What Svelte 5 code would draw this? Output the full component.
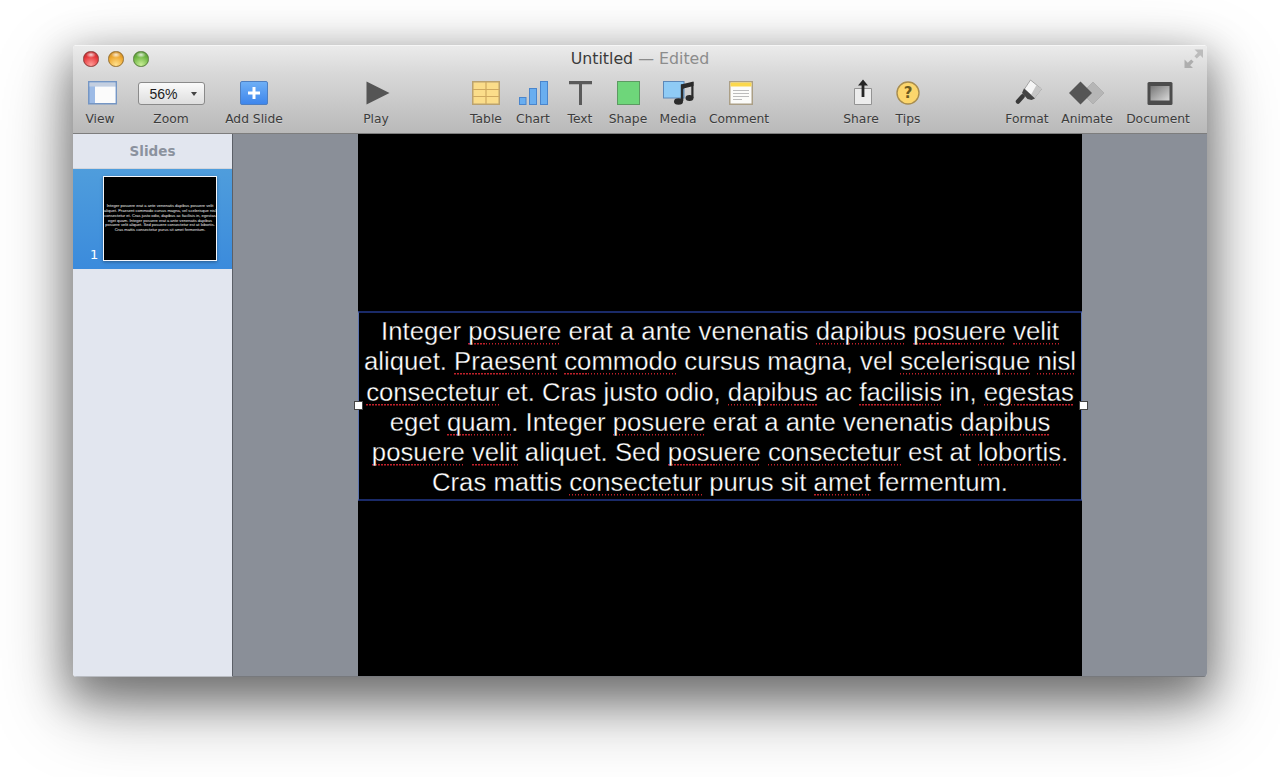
<script>
	const lines = [
		[['Integer '], ['posuere', 1], [' erat a ante venenatis '], ['dapibus', 1], [' '], ['posuere', 1], [' '], ['velit', 1]],
		[['aliquet. '], ['Praesent', 1], [' '], ['commodo', 1], [' cursus magna, vel '], ['scelerisque', 1], [' '], ['nisl', 1]],
		[['consectetur', 1], [' et. Cras justo odio, '], ['dapibus', 1], [' ac '], ['facilisis', 1], [' in, '], ['egestas', 1]],
		[['eget '], ['quam', 1], ['. Integer '], ['posuere', 1], [' erat a ante venenatis '], ['dapibus', 1]],
		[['posuere', 1], [' '], ['velit', 1], [' aliquet. Sed '], ['posuere', 1], [' '], ['consectetur', 1], [' est at '], ['lobortis', 1], ['.']],
		[['Cras mattis '], ['consectetur', 1], [' purus sit '], ['amet', 1], [' fermentum.']]
	];
</script>

{#snippet tool(label)}
	<span class="tool-label">{label}</span>
{/snippet}

<div class="page">
	<div class="window">
		<header class="toolbar">
			<div class="titlebar">
				<div class="lights">
					<span class="light red"></span>
					<span class="light amber"></span>
					<span class="light green"></span>
				</div>
				<div class="title">Untitled <span class="edited">— Edited</span></div>
				<svg class="fullscreen" width="20" height="20" viewBox="0 0 20 20">
					<path d="M10.500 0.500H19V9l-2.800-2.800-3.400 3.400-2.400-2.400 3.400-3.400z" fill="#bcbcbc" />
					<path d="M0.500 10.500V19H9l-2.800-2.800 3.400-3.400-2.400-2.400-3.400 3.400z" fill="#aeaeae" />
				</svg>
			</div>
			<div class="tools">
				<div class="tool w-view">
					<svg class="nudge-4" width="29" height="24" viewBox="0 0 29 24">
						<rect x="0.750" y="0.750" width="27.500" height="22" fill="#9dbbe6" stroke="#7596c4" stroke-width="1.500" />
						<rect x="1.500" y="1.500" width="26" height="4" fill="#c4cfe0" />
						<rect x="7" y="5.500" width="20.500" height="16.500" fill="#fbfbfb" />
					</svg>
					{@render tool('View')}
				</div>
				<div class="tool w-zoom">
					<div class="zoom-box"><span>56%</span><i></i></div>
					{@render tool('Zoom')}
				</div>
				<div class="tool w-add">
					<svg width="28" height="24" viewBox="0 0 28 24">
						<defs>
							<linearGradient id="addFill" x1="0" y1="0" x2="0" y2="1">
								<stop offset="0" stop-color="#6fb0f6" />
								<stop offset="1" stop-color="#3d85ec" />
							</linearGradient>
						</defs>
						<rect x="0.500" y="0.500" width="27" height="23" rx="1.500" fill="url(#addFill)" stroke="#4f7fc0" />
						<path d="M12.500 6h3v4.500H20v3h-4.500V18h-3v-4.500H8v-3h4.500z" fill="#fff" />
					</svg>
					{@render tool('Add Slide')}
				</div>
				<div class="tool w-play gap-play">
					<svg class="nudge-3" width="24" height="24" viewBox="0 0 24 24"><path d="M0.500 0.500L23.500 12 0.500 23.500z" fill="#555" /></svg>
					{@render tool('Play')}
				</div>
				<div class="tool w-table gap-table">
					<svg width="28" height="24" viewBox="0 0 28 24">
						<rect x="0.750" y="0.750" width="26.500" height="22.500" fill="#fbdd8a" stroke="#bba26f" stroke-width="1.500" />
						<path d="M1 8.500h26M1 15.500h26M14 1v22" stroke="#cfa95f" stroke-width="1.200" />
					</svg>
					{@render tool('Table')}
				</div>
				<div class="tool w-chart">
					<svg width="29" height="24" viewBox="0 0 29 24">
						<g fill="#69aef0" stroke="#4a85cc">
							<rect x="0.500" y="16.500" width="6.500" height="7" />
							<rect x="10.500" y="7.500" width="7" height="16" />
							<rect x="21.500" y="0.500" width="7" height="23" />
						</g>
					</svg>
					{@render tool('Chart')}
				</div>
				<div class="tool w-text">
					<svg width="23" height="24" viewBox="0 0 23 24"><path d="M0 0h23v3.200H13v20.800H10V3.200H0z" fill="#5a5a5a" /></svg>
					{@render tool('Text')}
				</div>
				<div class="tool w-shape">
					<svg width="23" height="24" viewBox="0 0 23 24"><rect x="0.500" y="0.500" width="22" height="23" fill="#6ed67a" stroke="#5c9a62" /></svg>
					{@render tool('Shape')}
				</div>
				<div class="tool w-media">
					<svg width="31" height="24" viewBox="0 0 31 24">
						<rect x="0.500" y="0.500" width="20.500" height="16.500" fill="#8fcbf5" stroke="#5d88b8" />
						<path d="M18 3.500L30.500 0.500V5L20.500 7.500V8l-2.500 .5z" fill="#2b2b2b" />
						<path d="M17.800 3.500h2.500v16.500h-2.500zM28.300 1h2.200v16h-2.200z" fill="#2b2b2b" />
						<ellipse cx="15.500" cy="20.500" rx="4.500" ry="3.200" fill="#2b2b2b" />
						<ellipse cx="26.500" cy="17" rx="4" ry="3" fill="#2b2b2b" />
					</svg>
					{@render tool('Media')}
				</div>
				<div class="tool w-comment">
					<svg class="nudge-3" width="24" height="24" viewBox="0 0 24 24">
						<rect x="0.750" y="0.750" width="22.500" height="22.500" fill="#fcfcfa" stroke="#ab9f86" stroke-width="1.500" />
						<rect x="1.500" y="1.500" width="21" height="4" fill="#fbd84d" />
						<path d="M4 9.500h16M4 12.500h16M4 15.500h16M4 18.500h9" stroke="#bcbcbc" />
					</svg>
					{@render tool('Comment')}
				</div>
				<div class="tool w-share gap-share">
					<svg class="nudge-3" width="22" height="26" viewBox="0 0 22 26">
						<path d="M2.500 9.500h17v16h-17z" fill="#ececec" stroke="#939393" />
						<path d="M11 0.500l5 6h-3.600v11.500h-2.800V6.500H6z" fill="#262626" />
					</svg>
					{@render tool('Share')}
				</div>
				<div class="tool w-tips">
					<svg width="24" height="24" viewBox="0 0 24 24">
						<circle cx="12" cy="12" r="11" fill="#fcd66c" stroke="#a88d4f" stroke-width="1.400" />
						<text x="12" y="17" class="tips-mark">?</text>
					</svg>
					{@render tool('Tips')}
				</div>
				<div class="tool w-format gap-format">
					<svg class="nudge-3" width="28" height="26" viewBox="0 0 28 26">
						<path d="M15.500 1l11 9-7 9-10-9z" fill="#f6f6f6" stroke="#8a8a8a" stroke-width="0.700" />
						<path d="M21.500 6l5 4-7 9-3.500-3.200z" fill="#c6c6c6" />
						<path d="M9 9.500L20 19.500l-3.500 1.500-4-1-5.500-6z" fill="#444" />
						<path d="M7.500 17.500l-4.500 5" stroke="#3a3a3a" stroke-width="4.500" stroke-linecap="round" />
					</svg>
					{@render tool('Format')}
				</div>
				<div class="tool w-animate">
					<svg width="36" height="24" viewBox="0 0 36 24">
						<path d="M24 1l11 11-11 11-11-11z" fill="#b6b6b6" stroke="#a2a2a2" stroke-width="0.600" />
						<path d="M11.500 0.500L23 12 11.500 23.500 0 12z" fill="#555" />
					</svg>
					{@render tool('Animate')}
				</div>
				<div class="tool w-doc">
					<svg class="nudge-3" width="26" height="24" viewBox="0 0 26 24">
						<defs>
							<linearGradient id="docFill" x1="0" y1="0" x2="1" y2="1">
								<stop offset="0" stop-color="#777" />
								<stop offset="1" stop-color="#d8d8d8" />
							</linearGradient>
						</defs>
						<rect x="0.500" y="1" width="25" height="23" rx="1.500" fill="#4c4c4c" />
						<rect x="3.500" y="5" width="19" height="14.500" fill="url(#docFill)" />
					</svg>
					{@render tool('Document')}
				</div>
			</div>
		</header>

		<div class="body">
			<aside class="sidebar">
				<div class="sidebar-head">Slides</div>
				<div class="slide-row">
					<span class="slide-num">1</span>
					<div class="thumb">
						<div class="thumb-text">
							{#each lines as line}
								<div>{#each line as part}{part[0]}{/each}</div>
							{/each}
						</div>
					</div>
				</div>
			</aside>
			<main class="canvas">
				<div class="slide">
					<div class="textbox">
						<span class="handle left"></span>
						<span class="handle right"></span>
						{#each lines as line}
							<div class="line">{#each line as part}{#if part[1]}<span class="misspelt">{part[0]}</span>{:else}{part[0]}{/if}{/each}</div>
						{/each}
					</div>
				</div>
			</main>
		</div>
	</div>
</div>

<style>
	:global(body) {
		background: #fff;
	}

	.page {
		width: 1280px;
		height: 777px;
		padding: 45px 73px 100px;
		box-sizing: border-box;
		overflow: hidden;
		font-family: 'DejaVu Sans', 'Liberation Sans', sans-serif;
	}

	.window {
		height: 632px;
		display: flex;
		flex-direction: column;
		border-radius: 4px;
		overflow: hidden;
		box-shadow:
			0 16px 40px 6px rgba(0, 0, 0, 0.36),
			0 28px 76px 0 rgba(0, 0, 0, 0.36);
		position: relative;
	}

	.toolbar {
		height: 89px;
		flex-shrink: 0;
		box-sizing: border-box;
		background: linear-gradient(#ebebeb, #d9d9d9 30%, #b9b9b9);
		border-top: 1px solid #f6f6f6;
		border-bottom: 1px solid #7d7d7d;
	}

	.titlebar {
		height: 26px;
		display: flex;
		align-items: center;
		justify-content: center;
		position: relative;
	}

	.lights {
		position: absolute;
		left: 10px;
		top: 5px;
		display: flex;
		gap: 9.500px;
	}

	.light {
		width: 15.500px;
		height: 15.500px;
		border-radius: 50%;
		box-sizing: border-box;
	}

	.red {
		background: radial-gradient(ellipse 5px 3px at 50% 20%, rgba(255, 255, 255, 0.8), transparent),
			radial-gradient(circle at 50% 90%, #ff9a95, #e5383c 60%, #b81f22);
		border: 1px solid #8d3a38;
	}

	.amber {
		background: radial-gradient(ellipse 5px 3px at 50% 20%, rgba(255, 255, 255, 0.8), transparent),
			radial-gradient(circle at 50% 90%, #ffe08c, #eda62e 60%, #bd7c1c);
		border: 1px solid #96702f;
	}

	.green {
		background: radial-gradient(ellipse 5px 3px at 50% 20%, rgba(255, 255, 255, 0.8), transparent),
			radial-gradient(circle at 50% 90%, #c8ee96, #6fb644 60%, #4c8e2c);
		border: 1px solid #587f3c;
	}

	.title {
		font-size: 15.800px;
		color: #3a3a3a;
		margin-top: -2px;
	}

	.edited {
		color: #8c8c8c;
	}

	.fullscreen {
		position: absolute;
		right: 3px;
		top: 3px;
	}

	.tools {
		display: flex;
		padding-left: 7px;
		margin-top: 7px;
	}

	.tool {
		display: flex;
		flex-direction: column;
		align-items: center;
		justify-content: flex-end;
		height: 48px;
		flex-shrink: 0;
	}

	.tool svg {
		display: block;
		margin-bottom: 6px;
	}

	.tool svg.nudge-3 {
		margin-left: 3px;
	}

	.tool svg.nudge-4 {
		margin-left: 4px;
	}

	.tool-label {
		font-size: 12.300px;
		line-height: 16px;
		color: #3c3c3c;
		white-space: nowrap;
		text-shadow: 0 1px 0 rgba(255, 255, 255, 0.3);
	}

	.w-view { width: 40px; }
	.w-zoom { width: 102px; }
	.w-add { width: 64px; }
	.w-play { width: 40px; }
	.w-table { width: 40px; }
	.w-chart { width: 54px; }
	.w-text { width: 40px; }
	.w-shape { width: 56px; }
	.w-media { width: 44px; }
	.w-comment { width: 78px; }
	.w-share { width: 40px; }
	.w-tips { width: 54px; }
	.w-format { width: 46px; }
	.w-animate { width: 74px; }
	.w-doc { width: 68px; }

	.gap-play { margin-left: 70px; }
	.gap-table { margin-left: 70px; }
	.gap-share { margin-left: 63px; }
	.gap-format { margin-left: 69px; }

	.zoom-box {
		width: 67px;
		height: 23px;
		margin-bottom: 6px;
		box-sizing: border-box;
		border: 1px solid #8a8a8a;
		border-radius: 3px;
		background: linear-gradient(#fafafa, #dedede);
		display: flex;
		align-items: center;
		font-family: 'Liberation Sans', sans-serif;
		font-size: 14px;
		color: #1c1c1c;
		padding-left: 11px;
		position: relative;
	}

	.zoom-box i {
		position: absolute;
		right: 7px;
		top: 9px;
		border: 3px solid transparent;
		border-top: 4px solid #444;
		border-bottom: 0;
	}

	.tips-mark {
		font-size: 15px;
		font-weight: 700;
		fill: #6b5a22;
		text-anchor: middle;
	}

	.body {
		flex: 1;
		display: flex;
		min-height: 0;
	}

	.sidebar {
		width: 160px;
		flex-shrink: 0;
		box-sizing: border-box;
		background: #e2e6ef;
		border-right: 1.500px solid #5c6068;
		border-bottom: 1px solid #b9bcc2;
	}

	.sidebar-head {
		height: 35px;
		box-sizing: border-box;
		padding-top: 9px;
		text-align: center;
		font-size: 13.500px;
		font-weight: 700;
		color: #8b929e;
		border-bottom: 1px solid #d2d5dc;
	}

	.slide-row {
		height: 100px;
		box-sizing: border-box;
		background: linear-gradient(#4f9ddc, #3b8bdc);
		padding: 7px 0 0 30px;
		position: relative;
	}

	.slide-num {
		position: absolute;
		left: 17px;
		top: 78px;
		color: #fff;
		font-size: 13px;
	}

	.thumb {
		width: 114px;
		height: 85px;
		box-sizing: border-box;
		background: #000;
		border: 1px solid #f4f6fa;
		box-shadow: 0 1px 3px rgba(0, 0, 0, 0.35);
		display: flex;
		align-items: center;
		justify-content: center;
	}

	.thumb-text {
		font-family: 'Liberation Sans', sans-serif;
		font-size: 4.050px;
		line-height: 4.750px;
		color: #f4f4f4;
		text-align: center;
		white-space: nowrap;
	}

	.canvas {
		flex: 1;
		display: flex;
		justify-content: center;
		background: #8a8f98;
		border-bottom: 1px solid #77797d;
		min-width: 0;
	}

	.slide {
		width: 724px;
		background: #000;
		display: flex;
		align-items: center;
	}

	.textbox {
		width: 100%;
		height: 190px;
		box-sizing: border-box;
		border: 1px solid #5d74b0;
		border-top: 2px solid #1a2a68;
		border-bottom: 2px solid #1a2a68;
		margin-top: 2px;
		padding-top: 3px;
		position: relative;
		text-align: center;
		color: #fff;
		font-family: 'Liberation Sans', sans-serif;
		font-size: 25.720px;
		line-height: 30.300px;
		white-space: nowrap;
		-webkit-text-stroke: 0.3px #000;
	}

	.misspelt {
		background: repeating-linear-gradient(90deg, #c0202a 0 1.500px, transparent 1.500px 3px) 0 26px / 100% 1.500px no-repeat;
	}

	.handle {
		position: absolute;
		top: 88px;
		width: 9px;
		height: 9px;
		background: #fff;
		border: 1px solid #444;
		box-sizing: border-box;
	}

	.handle.left { left: -5.500px; }
	.handle.right { right: -7px; }
</style>
